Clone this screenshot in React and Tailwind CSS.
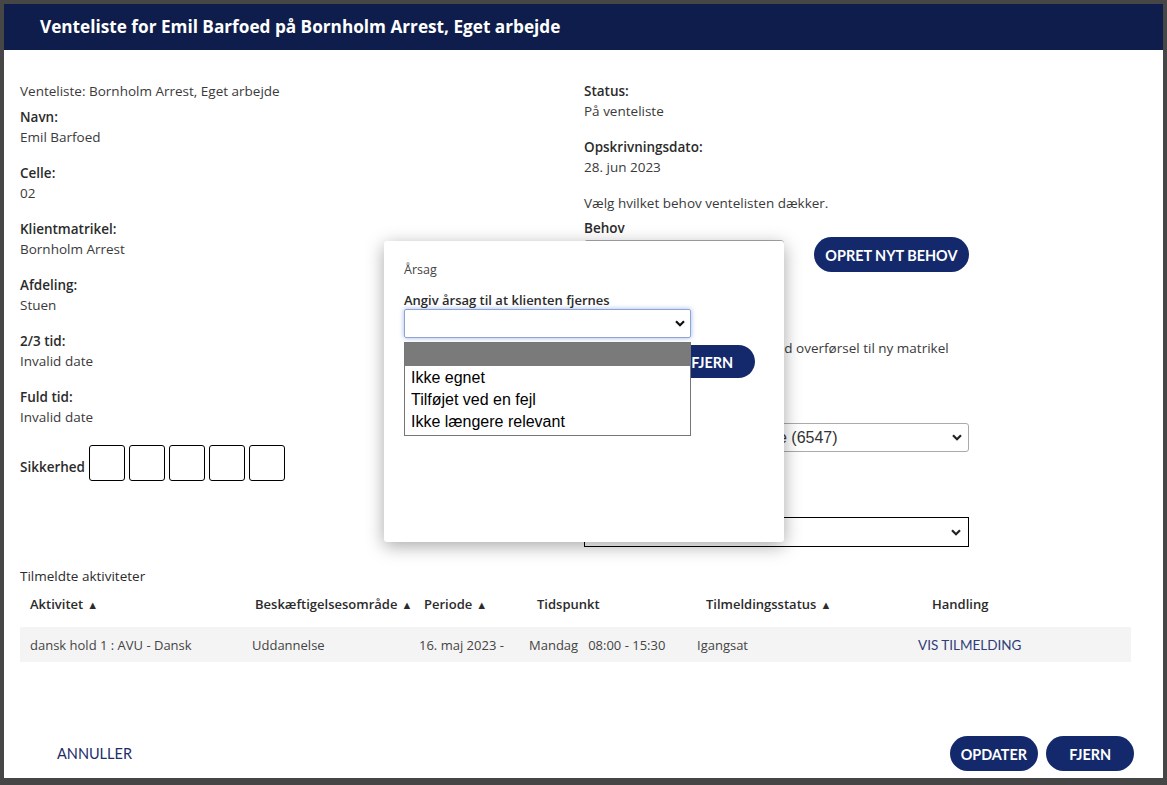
import React from "react";

const Chevron = ({ className = "" }) => (
  <svg width="10" height="7" viewBox="0 0 10 7" className={className}>
    <polyline points="1,1.2 5,5.2 9,1.2" fill="none" stroke="currentColor" strokeWidth="2.2" />
  </svg>
);

function Field({ label, value, className = "" }) {
  return (
    <div className={className}>
      <p className="font-semibold text-[#2b2b2b]">{label}</p>
      <p>{value}</p>
    </div>
  );
}

function PillButton({ children, className = "" }) {
  return (
    <button className={`rounded-full bg-[#14296b] text-white font-['Lato',sans-serif] font-bold text-[16px] ${className}`}>
      <span className="inline-block scale-x-90">{children}</span>
    </button>
  );
}

const headers = [
  { label: "Aktivitet", sort: true, pad: "pl-[10px]" },
  { label: "Beskæftigelsesområde", sort: true, pad: "pl-[13px]" },
  { label: "Periode", sort: true, pad: "pl-[15px]" },
  { label: "Tidspunkt", sort: false, pad: "pl-[18px]" },
  { label: "Tilmeldingsstatus", sort: true, pad: "pl-[19px]" },
  { label: "Handling", sort: false, pad: "pl-[24px]" },
];

export default function App() {
  return (
    <div className="w-[1167px] h-[785px] bg-[#464646] pt-[4px] pl-[4px] overflow-hidden font-['Open_Sans',sans-serif] text-[13.5px] leading-[20px] text-[#3a3a3a]">
      <div className="relative w-[1159px] h-[774px] bg-white flex flex-col">
        {/* Header */}
        <div className="h-[46px] shrink-0 bg-[#0e1d4b] flex items-center pl-[36px]">
          <h1 className="text-[17.2px] font-bold text-white">
            Venteliste for Emil Barfoed på Bornholm Arrest, Eget arbejde
          </h1>
        </div>

        {/* Body */}
        <div className="flex-1 pl-[16px] pr-[32px] pt-[31px]">
          <div className="grid grid-cols-[564px_1fr]">
            {/* Left column */}
            <div>
              <p>Venteliste: Bornholm Arrest, Eget arbejde</p>
              <Field className="mt-[6px]" label="Navn:" value="Emil Barfoed" />
              <Field className="mt-[16px]" label="Celle:" value="02" />
              <Field className="mt-[16px]" label="Klientmatrikel:" value="Bornholm Arrest" />
              <Field className="mt-[16px]" label="Afdeling:" value="Stuen" />
              <Field className="mt-[16px]" label="2/3 tid:" value="Invalid date" />
              <Field className="mt-[16px]" label="Fuld tid:" value="Invalid date" />
              <div className="mt-[18px] flex items-center">
                <span className="font-semibold text-[#2b2b2b] pt-[8px]">Sikkerhed</span>
                <div className="ml-[4px] flex gap-[4px]">
                  {[0, 1, 2, 3, 4].map((i) => (
                    <div key={i} className="w-[36px] h-[36px] border border-black rounded-[3px]" />
                  ))}
                </div>
              </div>
            </div>

            {/* Right column */}
            <div>
              <Field label="Status:" value="På venteliste" />
              <Field className="mt-[16px]" label="Opskrivningsdato:" value="28. jun 2023" />
              <p className="mt-[16px]">Vælg hvilket behov ventelisten dækker.</p>
              <p className="mt-[6px] font-semibold text-[#2b2b2b] leading-[18px]">Behov</p>
              <div className="flex items-center">
                <div className="w-[200px] h-[30px] border border-[#aaa] rounded-[3px]" />
                <PillButton className="ml-[30px] w-[155px] h-[35px]">OPRET NYT BEHOV</PillButton>
              </div>

              <div className="mt-[66px] flex items-start">
                <div className="w-[85px]" />
                <PillButton className="relative z-20 mt-[7px] w-[86px] h-[33px]">FJERN</PillButton>
                <p className="ml-[15px]">ved overførsel til ny matrikel</p>
              </div>

              <p className="mt-[25px] font-semibold text-[#2b2b2b]">Matrikel</p>
              <div className="w-[385px] h-[29px] border border-[#aaa] rounded-[3px] flex items-center justify-between pl-[8px] pr-[6px] font-['Liberation_Sans',Arial,sans-serif] text-[16px] text-[#333]">
                <span>Rønne Arrest, Eget arbejde (6547)</span>
                <Chevron className="text-[#222]" />
              </div>

              <p className="mt-[45px] font-semibold text-[#2b2b2b]">Afdeling</p>
              <div className="w-[385px] h-[30px] border border-black flex items-center justify-end pr-[7px]">
                <Chevron className="text-[#222]" />
              </div>
            </div>
          </div>

          {/* Activities */}
          <p className="mt-[19px] text-[#2b2b2b]">Tilmeldte aktiviteter</p>
          <div className="mt-[8px] grid grid-cols-[222px_167px_110px_168px_221px_1fr] font-semibold text-[13px] text-[#2b2b2b]">
            {headers.map((h) => (
              <div key={h.label} className={h.pad}>
                {h.label}
                {h.sort && <span className="ml-[4px] text-[11px]">▲</span>}
              </div>
            ))}
          </div>
          <div className="mt-[12px] h-[35px] bg-[#f4f4f4] grid grid-cols-[222px_167px_110px_168px_221px_1fr] items-center text-[13px] text-[#444]">
            <div className="pl-[10px]">dansk hold 1 : AVU - Dansk</div>
            <div className="pl-[10px]">Uddannelse</div>
            <div className="pl-[10px]">16. maj 2023 -</div>
            <div className="pl-[10px]">
              <span>Mandag</span>
              <span className="ml-[10px]">08:00 - 15:30</span>
            </div>
            <div className="pl-[10px]">Igangsat</div>
            <div className="pl-[10px] font-['Lato',sans-serif] text-[13.5px] text-[#2f3d7a]">VIS TILMELDING</div>
          </div>
        </div>

        {/* Footer */}
        <div className="shrink-0 flex items-center justify-between pl-[53px] pr-[29px] pb-[7px]">
          <button className="font-['Lato',sans-serif] text-[14.5px] text-[#1d2d6b]">ANNULLER</button>
          <div className="flex gap-[8px]">
            <PillButton className="w-[88px] h-[35px]">OPDATER</PillButton>
            <PillButton className="w-[88px] h-[35px]">FJERN</PillButton>
          </div>
        </div>

        {/* Årsag popup */}
        <div className="absolute left-[380px] top-[237px] w-[400px] h-[301px] bg-white rounded-[3px] shadow-[0_4px_18px_rgba(0,0,0,0.35)] pl-[20px] pt-[19px]">
          <p className="text-[12.5px] text-[#444]">Årsag</p>
          <p className="mt-[11px] font-semibold text-[13px] text-[#2b2b2b] leading-[18px]">Angiv årsag til at klienten fjernes</p>
          <div className="w-[287px] h-[29px] border border-[#8fa4cf] rounded-[2px] shadow-[0_0_5px_rgba(80,120,220,0.55)] flex items-center justify-end pr-[5px]">
            <Chevron className="text-[#111]" />
          </div>
          <div className="absolute z-30 left-[20px] top-[101px] w-[287px] bg-white border border-[#767676] font-['Liberation_Sans',Arial,sans-serif] text-[16px] leading-[22px] text-black pb-[2px]">
            <div className="h-[23px] bg-[#7a7a7a]" />
            <div className="pl-[6px] pt-[1px]">Ikke egnet</div>
            <div className="pl-[6px]">Tilføjet ved en fejl</div>
            <div className="pl-[6px]">Ikke længere relevant</div>
          </div>
        </div>
      </div>
    </div>
  );
}
